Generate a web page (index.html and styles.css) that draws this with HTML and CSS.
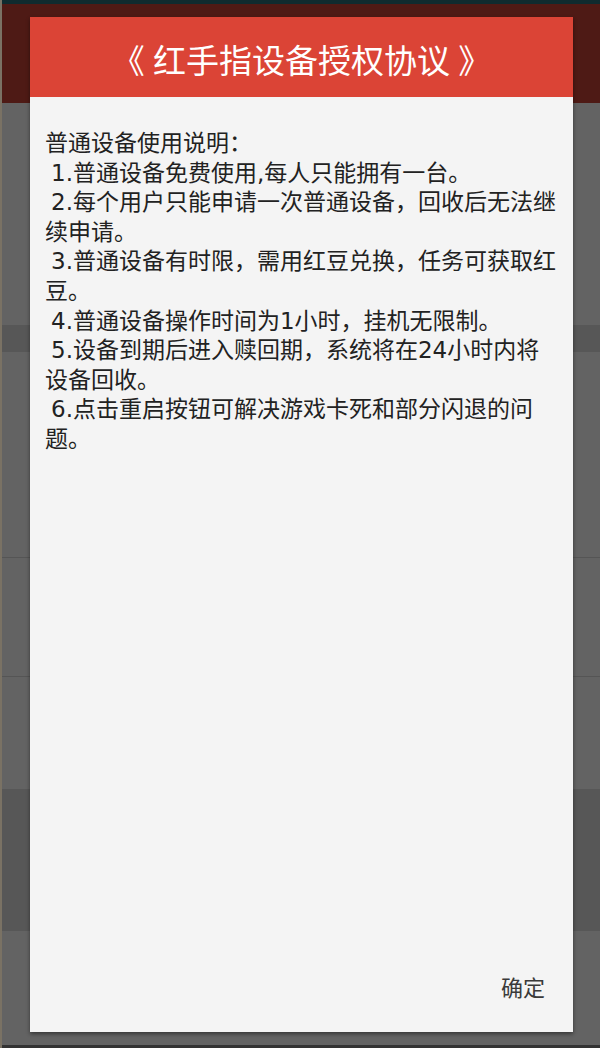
FILE: index.html
```html
<!DOCTYPE html>
<html lang="zh-CN">
<head>
  <meta charset="UTF-8" />
  <meta name="viewport" content="width=device-width, initial-scale=1.0"/>
  <title>红手指设备授权协议</title>
  <link rel="stylesheet" href="styles.css">
</head>
<body>
  <!-- 背后的页面（被遮罩压暗） -->
  <div id="backdrop">
    <div class="status-bar"></div>
    <div class="app-bar"></div>
    <div class="row row-a"></div>
    <div class="row row-dark row-strip"></div>
    <div class="row row-b"></div>
    <div class="row row-c"></div>
    <div class="row row-d"></div>
    <div class="row row-dark row-e"></div>
    <div class="row row-f"></div>
    <div class="nav-bar"></div>
  </div>

  <!-- 授权协议弹窗 -->
  <div id="dialog">
    <div class="dialog-header">《 红手指设备授权协议 》</div>
    <div class="dialog-body">
      <p class="intro">普通设备使用说明：</p>
      <p class="item">1.普通设备免费使用,每人只能拥有一台。</p>
      <p class="item">2.每个用户只能申请一次普通设备，回收后无法继续申请。</p>
      <p class="item">3.普通设备有时限，需用红豆兑换，任务可获取红豆。</p>
      <p class="item">4.普通设备操作时间为1小时，挂机无限制。</p>
      <p class="item">5.设备到期后进入赎回期，系统将在24小时内将设备回收。</p>
      <p class="item">6.点击重启按钮可解决游戏卡死和部分闪退的问题。</p>
    </div>
    <div class="dialog-footer">
      <button id="ok-btn">确定</button>
    </div>
  </div>
</body>
</html>
```

FILE: styles.css
```css
* { box-sizing: border-box; margin: 0; padding: 0; }
body {
  width: 600px;
  height: 1048px;
  overflow: hidden;
  font-family: 'Roboto', 'Noto Sans CJK SC', sans-serif;
  background: #636363;
}
#backdrop {
  display: flex;
  flex-direction: column;
  height: 100%;
  border-left: 2px solid #7a7264;
}
.status-bar {
  height: 4px;
  background: #0f2b2f;
}
.app-bar {
  height: 99px;
  background: #4e1a15;
}
.row {
  background: #636363;
}
.row-a { height: 222px; }
.row-dark { background: #575757; }
.row-strip { height: 27px; }
.row-b { height: 206px; border-bottom: 1px solid #555; }
.row-c { height: 119px; border-bottom: 1px solid #555; }
.row-d { height: 112px; }
.row-e { height: 142px; }
.row-f { flex: 1; }
.nav-bar {
  height: 3px;
  background: #333;
}

#dialog {
  position: absolute;
  left: 30px;
  top: 17px;
  width: 543px;
  height: 1015px;
  display: flex;
  flex-direction: column;
  background: #f4f4f4;
  box-shadow: 0 2px 4px rgba(0, 0, 0, 0.45);
}
.dialog-header {
  height: 80px;
  display: flex;
  align-items: center;
  justify-content: center;
  padding-top: 4px;
  background: #db4436;
  color: #fff;
  font-size: 33px;
}
.dialog-body {
  flex: 1;
  padding: 32px 15px 0 15px;
  font-family: 'DejaVu Sans', 'Noto Sans CJK SC', sans-serif;
  color: #222;
  font-size: 23px;
  line-height: 29.6px;
}
.dialog-body .item {
  text-indent: 6px;
}
.dialog-footer {
  display: flex;
  justify-content: flex-end;
  padding: 0 28px 30px 0;
}
#ok-btn {
  border: none;
  background: none;
  font-family: inherit;
  font-size: 22px;
  color: #3a3a3a;
  cursor: pointer;
}
```
